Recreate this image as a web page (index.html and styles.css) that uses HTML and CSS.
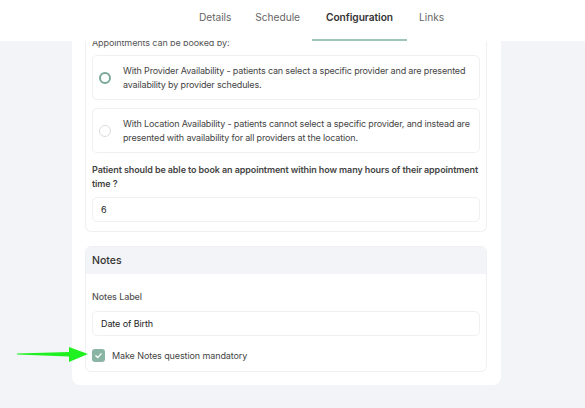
FILE: index.html
```html
<!DOCTYPE html>
<html>
<head>
<meta charset="utf-8">
<link rel="stylesheet" href="styles.css">
</head>
<body>
<header class="topbar">
  <nav class="tabs">
    <span class="tab">Details</span>
    <span class="tab">Schedule</span>
    <span class="tab active">Configuration</span>
    <span class="tab">Links</span>
  </nav>
</header>
<main class="page">
  <div class="outer">
    <section class="card">
      <p class="intro">Appointments can be booked by:</p>
      <div class="option">
        <span class="radio checked"></span>
        <span class="opt-text">With Provider Availability - patients can select a specific provider and are presented availability by provider schedules.</span>
      </div>
      <div class="option">
        <span class="radio"></span>
        <span class="opt-text">With Location Availability - patients cannot select a specific provider, and instead are presented with availability for all providers at the location.</span>
      </div>
      <p class="question">Patient should be able to book an appointment within how many hours of their appointment time ?</p>
      <div class="input">6</div>
    </section>
    <section class="card notes">
      <div class="notes-head">Notes</div>
      <div class="notes-body">
        <p class="label">Notes Label</p>
        <div class="input">Date of Birth</div>
        <div class="check-row">
          <svg class="arrow" width="72" height="16" viewBox="0 0 72 16"><polygon points="0,6.6 52,5 52,0 71,7 52,15 52,9.6 0,7.4" fill="#1ff01f"/></svg>
          <span class="checkbox"><svg width="9" height="9" viewBox="0 0 10 10"><polyline points="2,5.2 4.2,7.3 8,3" fill="none" stroke="#fff" stroke-width="1.4" stroke-linecap="round" stroke-linejoin="round"/></svg></span>
          <span class="check-text">Make Notes question mandatory</span>
        </div>
      </div>
    </section>
  </div>
</main>
</body>
</html>
```
FILE: styles.css
```css
* { box-sizing: border-box; }
html, body { margin: 0; padding: 0; }
body {
  background: #f3f4f7;
  font-family: "Inter", "Liberation Sans", sans-serif;
  color: #333;
  width: 585px;
  height: 408px;
  overflow: hidden;
}
.topbar {
  position: sticky;
  top: 0;
  z-index: 2;
  height: 41px;
  background: #fff;
  padding-left: 187px;
}
.tabs {
  display: flex;
  height: 41px;
}
.tab {
  display: flex;
  align-items: flex-start;
  padding: 11px 12px 0;
  font-size: 10.2px;
  letter-spacing: -0.05px;
  color: #666;
  height: 41px;
  border-bottom: 2px solid transparent;
}
.tab.active {
  font-weight: 600;
  color: #333;
  border-bottom-color: #9ec6b8;
  padding: 11px 14px 0;
}
.page {
  margin-top: -5px;
  padding-left: 72px;
}
.outer {
  width: 429px;
  background: #fff;
  border-radius: 0 0 8px 8px;
  padding: 0 14px 13px 13px;
  display: flex;
  flex-direction: column;
  gap: 14px;
}
.card {
  border: 1px solid #eef0f3;
  border-top: none;
  border-radius: 0 0 6px 6px;
  padding: 0 6px 9px;
}
.intro {
  margin: 0 0 5px;
  font-size: 9px;
  letter-spacing: -0.1px;
  line-height: 14px;
  color: #555;
}
.option {
  display: flex;
  align-items: center;
  gap: 12px;
  border: 1px solid #eef0f3;
  border-radius: 5px;
  padding: 8px 6px;
  margin-bottom: 8px;
}
.radio {
  flex: none;
  width: 12px;
  height: 12px;
  border-radius: 50%;
  border: 1px solid #dcdcdc;
}
.radio.checked {
  border: 2px solid #7aa898;
}
.opt-text {
  font-size: 9px;
  letter-spacing: -0.16px;
  line-height: 13.5px;
  color: #444;
}
.question {
  margin: 10px 0 6px;
  font-size: 9px;
  letter-spacing: -0.1px;
  line-height: 14px;
  font-weight: 600;
  color: #444;
}
.input {
  border: 1px solid #eef0f3;
  border-radius: 5px;
  height: 25px;
  display: flex;
  align-items: center;
  padding-left: 8px;
  font-size: 9px;
  letter-spacing: -0.1px;
  color: #222;
}
.notes {
  border-top: 1px solid #eef0f3;
  border-radius: 6px;
  padding: 0;
}
.notes-head {
  background: #f3f4f7;
  height: 27px;
  border-radius: 5px 5px 0 0;
  display: flex;
  align-items: center;
  padding-left: 6px;
  font-size: 10.5px;
  font-weight: 500;
  color: #333;
}
.notes-body {
  padding: 16px 6px 9px;
}
.label {
  margin: 0 0 7px;
  font-size: 9px;
  letter-spacing: -0.1px;
  line-height: 14px;
  font-weight: 500;
  color: #555;
}
.check-row {
  position: relative;
  display: flex;
  align-items: center;
  gap: 7px;
  margin-top: 12px;
  height: 14px;
}
.checkbox {
  flex: none;
  width: 13px;
  height: 13px;
  border-radius: 3px;
  background: #8ab5a5;
  display: flex;
  align-items: center;
  justify-content: center;
}
.check-text {
  font-size: 9px;
  letter-spacing: -0.1px;
  color: #444;
}
.arrow {
  position: absolute;
  left: -75px;
  top: -1px;
}
```
